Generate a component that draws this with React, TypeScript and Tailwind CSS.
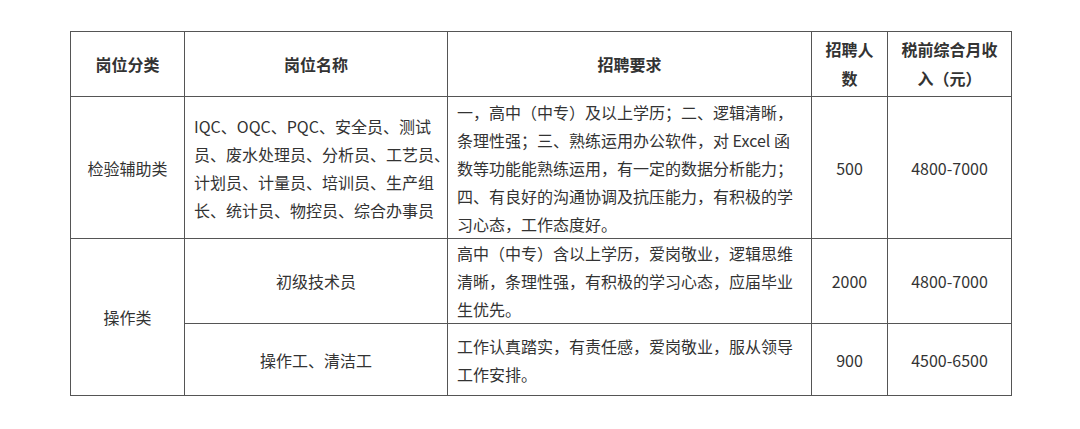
import React from "react";

const font = { fontFamily: '"Noto Sans CJK SC", "Noto Sans", sans-serif' };

function Lines({ lines }: { lines: string[] }) {
  return (
    <>
      {lines.map((l, i) => (
        <span key={i} className="block whitespace-nowrap">
          {l}
        </span>
      ))}
    </>
  );
}

export default function App() {
  const cell = "border border-[#555] text-[16px] leading-[28px] text-[#333]";
  return (
    <div className="w-[1080px] h-[429px] bg-white pt-[31px] pl-[70px]" style={font}>
      <table className="table-fixed border-collapse w-[941px]">
        <colgroup>
          <col className="w-[114px]" />
          <col className="w-[263px]" />
          <col className="w-[364px]" />
          <col className="w-[76px]" />
          <col className="w-[124px]" />
        </colgroup>
        <tbody>
          {/* header */}
          <tr className="h-[65px]">
            <th className={`${cell} font-bold text-center`}>岗位分类</th>
            <th className={`${cell} font-bold text-center`}>岗位名称</th>
            <th className={`${cell} font-bold text-center`}>招聘要求</th>
            <th className={`${cell} font-bold text-center leading-[29px]`}>
              <Lines lines={["招聘人", "数"]} />
            </th>
            <th className={`${cell} font-bold text-center leading-[29px]`}>
              <Lines lines={["税前综合月收", "入（元）"]} />
            </th>
          </tr>

          <tr className="h-[142px]">
            <td className={`${cell} text-center`}>检验辅助类</td>
            <td className={`${cell} text-left px-[9px]`}>
              <Lines
                lines={[
                  "IQC、OQC、PQC、安全员、测试",
                  "员、废水处理员、分析员、工艺员、",
                  "计划员、计量员、培训员、生产组",
                  "长、统计员、物控员、综合办事员",
                ]}
              />
            </td>
            <td className={`${cell} text-left px-[9px]`}>
              <Lines
                lines={[
                  "一，高中（中专）及以上学历；二、逻辑清晰，",
                  "条理性强；三、熟练运用办公软件，对 Excel 函",
                  "数等功能能熟练运用，有一定的数据分析能力；",
                  "四、有良好的沟通协调及抗压能力，有积极的学",
                  "习心态，工作态度好。",
                ]}
              />
            </td>
            <td className={`${cell} text-center`}>500</td>
            <td className={`${cell} text-center`}>4800-7000</td>
          </tr>

          <tr className="h-[85px]">
            <td className={`${cell} text-center`} rowSpan={2}>
              操作类
            </td>
            <td className={`${cell} text-center`}>初级技术员</td>
            <td className={`${cell} text-left px-[9px]`}>
              <Lines
                lines={[
                  "高中（中专）含以上学历，爱岗敬业，逻辑思维",
                  "清晰，条理性强，有积极的学习心态，应届毕业",
                  "生优先。",
                ]}
              />
            </td>
            <td className={`${cell} text-center`}>2000</td>
            <td className={`${cell} text-center`}>4800-7000</td>
          </tr>

          <tr className="h-[72px]">
            <td className={`${cell} text-center`}>操作工、清洁工</td>
            <td className={`${cell} text-left px-[9px]`}>
              <Lines
                lines={[
                  "工作认真踏实，有责任感，爱岗敬业，服从领导",
                  "工作安排。",
                ]}
              />
            </td>
            <td className={`${cell} text-center`}>900</td>
            <td className={`${cell} text-center`}>4500-6500</td>
          </tr>
        </tbody>
      </table>
    </div>
  );
}
